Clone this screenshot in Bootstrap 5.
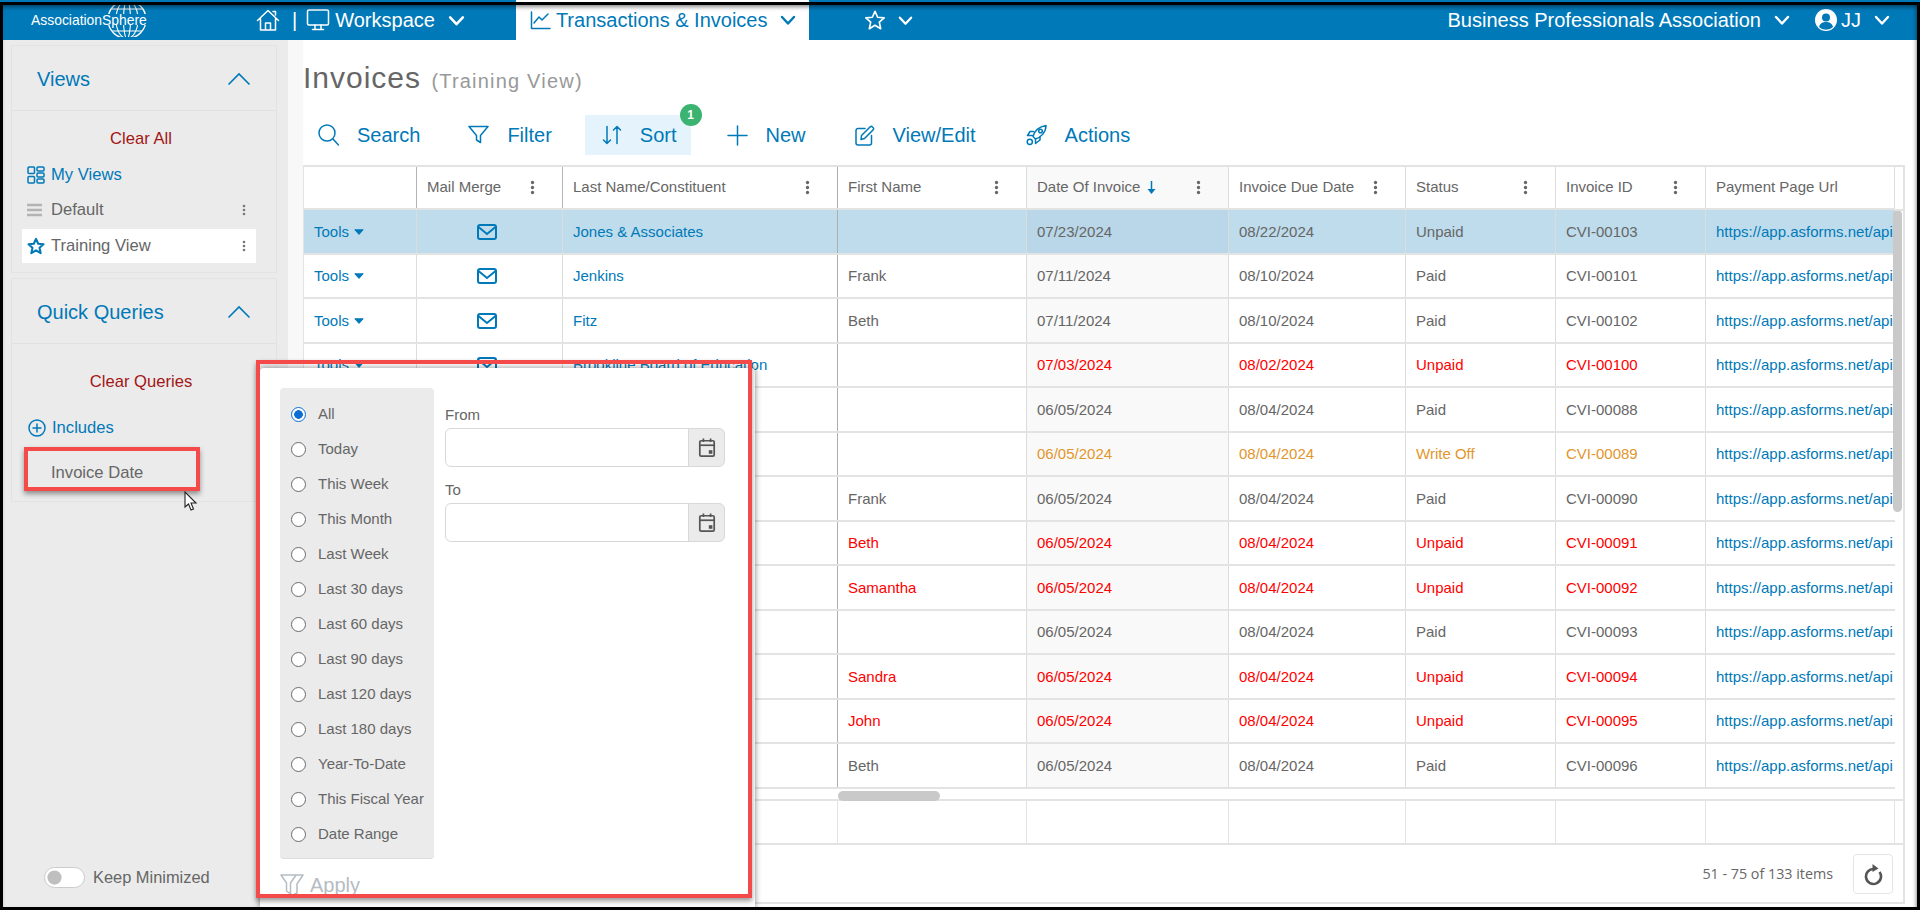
<!DOCTYPE html>
<html lang="en">
<head>
    <meta charset="UTF-8">
    <meta name="viewport" content="width=device-width, initial-scale=1.0">
    <title>Invoices - AssociationSphere</title>
    <link href="https://cdn.jsdelivr.net/npm/bootstrap@5.3.0/dist/css/bootstrap.min.css" rel="stylesheet">
    <style>
        html, body { height: 100%; }
        body { margin: 0; overflow: hidden; font-family: "Liberation Sans", Arial, sans-serif; font-size: 15px; color: #666; background: #fff; }
        svg { display: block; flex: none; }
        .ico { fill: none; stroke: currentColor; stroke-width: 1.5; stroke-linecap: round; stroke-linejoin: round; }

        .page-shell { height: 910px; position: relative; overflow: hidden; }
        .shot-frame { position: absolute; inset: 2px 0 0 0; border: 3px solid #000; box-shadow: inset 0 4px 4px -2px rgba(0,0,0,.45), inset -4px 0 4px -3px rgba(0,0,0,.35); pointer-events: none; z-index: 50; }
        .note-box { position: absolute; border: 4px solid #f44a4a; box-shadow: 0 3px 5px rgba(0,0,0,.4); pointer-events: none; z-index: 40; }
        .note-date { left: 24px; top: 447px; width: 176px; height: 44px; }
        .note-popup { left: 256px; top: 360px; width: 496px; height: 538px; }

        /* top bar */
        .top-bar { height: 40px; background: #0079b8; color: #fff; font-size: 20px; padding: 0; flex-wrap: nowrap; justify-content: flex-start; }
        .brand-box { position: relative; width: 148px; margin-left: 31px; font-size: 13.9px; line-height: 40px; color: #fff; white-space: nowrap; }
        .brand-globe { position: absolute; left: 75px; top: 3px; }
        .top-home { margin-left: 77px; }
        .top-sep { margin: 0 9px 0 12px; font-size: 20px; line-height: 40px; font-weight: 300; }
        .top-tab { height: 40px; display: flex; align-items: center; color: #fff; }
        .top-work { gap: 5px; }
        .top-tab.is-open { background: #fff; color: #0079b8; width: 293px; margin-left: 51px; padding-left: 14px; gap: 5px; }
        .top-star { margin-left: 55px; gap: 12px; stroke-width: 1.8; }
        .top-right { margin-left: auto; margin-right: 30px; gap: 13px; }
        .user-ico { margin-left: 11px; }
        .user-name { margin-left: -10px; }

        /* left side */
        .side-col { width: 288px; background: #ebebeb; padding: 5px 11px 0 11px; display: flex; flex-direction: column; flex: none; }
        .side-gap { width: 15px; background: #f8f8f8; flex: none; }
        .side-card { --bs-card-bg: #ebebeb; --bs-card-border-color: #e3e3e3; --bs-card-border-radius: 0; --bs-card-inner-border-radius: 0; width: 266px; margin-bottom: 5px; color: #666; }
        .side-card .card-header { height: 65px; padding: 2px 25px 0 25px; background: transparent; border-bottom: 1px solid #dfe1e4; display: flex; align-items: center; justify-content: space-between; color: #0079b8; font-size: 20px; }
        .side-card .card-body { padding: 0; }
        .views-card { height: 228px; }
        .query-card { height: 224px; }
        .clear-link { color: #a31515; text-align: center; font-size: 16.6px; line-height: 20px; margin-right: 6px; }
        .views-card .clear-link { margin-top: 18px; }
        .query-card .clear-link { margin-top: 28px; }
        .view-row { height: 34px; display: flex; align-items: center; padding-left: 5px; margin: 0 20px 0 10px; gap: 6px; font-size: 16.6px; }
        .view-row.is-blue { color: #0079b8; }
        .view-row.is-picked { background: #fff; margin-top: 2px; }
        .my-views { margin-top: 9px; margin-bottom: 1px; }
        .view-dots { margin-left: auto; margin-right: 10px; color: #777; }
        .star-blue { color: #0079b8; stroke-width: 2.8; }
        .includes-row { margin-top: 24px; height: 24px; padding-left: 6px; }
        .date-query { margin: 18px 0 0 39px; height: 30px; line-height: 30px; font-size: 16.6px; }
        .keep-row { margin-top: auto; height: 42px; display: flex; align-items: center; padding-left: 33px; padding-bottom: 23px; gap: 8px; margin-bottom: 0; font-size: 16.4px; }
        .keep-switch { width: 41px !important; height: 21px; margin: 0 !important; background-color: #fff; border: 1px solid #ccc; float: none; }
        .keep-wrap { padding: 0; margin: 0; min-height: 0; display: flex; }

        /* main */
        .main-col { width: 1602px; flex: none; position: relative; }
        .title-row { height: 75px; padding-top: 15px; color: #666; font-size: 30px; line-height: 46px; letter-spacing: 1px; margin: 0; }
        .title-row span { color: #999; font-size: 20px; letter-spacing: 1.2px; margin-left: 1px; }
        .tool-row { height: 50px; gap: 18px; margin: 0; }
        .tool-item { height: 40px; padding: 0 15px; display: flex; align-items: center; gap: 18px; color: #0079b8; font-size: 20px; position: relative; }
        .tool-item.is-on { background: #e5f4fc; padding-left: 17px; padding-right: 14px; margin-right: 3px; }
        .tool-item.is-edit { margin-left: 1px; }
        .tool-item.is-last { margin-left: 2px; }
        .tool-count { position: absolute; right: -11px; top: -11px; width: 22px; height: 22px; border-radius: 50%; background: #3cb371; color: #fff; font-size: 12px; font-weight: 700; display: flex; align-items: center; justify-content: center; }

        .grid-wrap { border-right: 2px solid #e3e3e3; }
        .grid-box { position: relative; border-top: 2px solid #e3e3e3; height: 624px; overflow: hidden; }
        .grid-box::after { content: ""; position: absolute; left: 1591px; right: 0; top: 42px; height: 2px; background: #e3e3e3; }
        .inv-grid { table-layout: fixed; width: 1591px; margin: 0; border-collapse: collapse; color: #666; }
        .inv-grid th, .inv-grid td { padding: 0 0 0 10px; border: 0; border-left: 1px solid #dcdcdc; border-bottom: 2px solid #e3e3e3; white-space: nowrap; overflow: hidden; vertical-align: middle; background: transparent; color: inherit; font-weight: 400; font-size: 15px; box-shadow: none; }
        .inv-grid th:first-child, .inv-grid td:first-child { border-left: 1px solid #e3e3e3; }
        .inv-grid thead th { height: 42px; }
        .inv-grid thead th:nth-child(2), .inv-grid thead th:nth-child(3) { border-left-color: #b4b4b4; }
        .inv-grid thead th:last-child { border-right: 1px solid #dcdcdc; }
        .inv-grid th:nth-child(4), .inv-grid td:nth-child(4) { border-left-color: #aeaeae; }
        .inv-grid tbody td { height: 44.5px; padding-top: 1px; }
        .inv-grid td:nth-child(5), .inv-grid th:nth-child(5) { background: #f9f9f9; }
        .inv-grid tr.is-sel td { background: #bedcec; }
        .inv-grid tr.is-sel td:nth-child(5) { background: #b9d7e8; }
        .inv-grid tr.is-red td { color: #f00; }
        .inv-grid tr.is-late td { color: #e2962c; }
        .inv-grid td a, .inv-grid tr.is-red td a { color: #0079b8; text-decoration: none; }
        .c-tool { width: 113px; } .c-mail { width: 146px; } .c-last { width: 275px; } .c-first { width: 189px; }
        .c-date { width: 202px; } .c-due { width: 177px; } .c-stat { width: 150px; } .c-id { width: 150px; } .c-url { width: 189px; }
        .head-cell { display: flex; align-items: center; justify-content: space-between; padding-right: 27px; }
        .head-dots { color: #666; }
        .sort-mark { color: #0079b8; display: inline-block; margin-left: 7px; }
        .tools-link { display: inline-flex; align-items: center; gap: 5px; }
        .mail-ico { color: #0079b8; margin-left: 50px; }
        .v-thumb { position: absolute; left: 1590px; top: 43px; width: 9px; height: 302px; border-radius: 5px; background: #c9c9c9; }
        .h-track { height: 14px; position: relative; border-bottom: 2px solid #e3e3e3; margin-top: -2px; }
        .h-thumb { position: absolute; left: 535px; top: 4px; width: 102px; height: 10px; border-radius: 5px; background: #c9c9c9; }
        .foot-grid td { height: 42px !important; border-left-color: #e3e3e3 !important; border-bottom: 0 !important; background: transparent !important; }
        .foot-grid td:last-child { border-right: 1px solid #e3e3e3; }

        .pager-row { height: 61px; border-top: 2px solid #e3e3e3; border-bottom: 2px solid #e3e3e3; padding-right: 10px; gap: 20px; font-family: "Open Sans", "Liberation Sans", sans-serif; font-size: 14.3px; color: #666; }
        .reload-btn { width: 40px; height: 40px; padding: 0; border: 1px solid #e5e5e5; border-radius: 4px; background: #fff; color: #555; display: flex; align-items: center; justify-content: center; }

        /* date popup */
        .date-pop { position: absolute; left: 260px; top: 368px; width: 495px; height: 542px; background: #fff; border-radius: 4px; box-shadow: 0 0 6px rgba(0,0,0,.45); padding: 20px 0 0 20px; z-index: 30; }
        .pop-range { width: 154px; height: 471px; background: #ebebeb; border-radius: 4px; border-bottom: 1px solid #ddd; padding: 9px 0 0 11px; flex: none; }
        .pop-range .form-check { height: 35px; min-height: 0; margin: 0; padding-left: 27px; display: flex; align-items: center; position: relative; }
        .pop-range .form-check-input { position: absolute; left: 0; top: 10px; margin: 0; width: 15px; height: 15px; border: 1.5px solid #6b6b6b; background-color: #fff; }
        .pop-range .form-check-input:checked { background-color: #fff; border-color: #0a6fd1; background-image: radial-gradient(circle, #0a6fd1 0 4px, transparent 4.6px); }
        .pop-range .form-check-label { font-size: 15px; color: #666; white-space: nowrap; }
        .pop-fields { width: 280px; margin-left: 11px; padding-top: 16px; }
        .pop-fields label { display: block; height: 22px; line-height: 22px; margin-bottom: 2px; color: #666; font-size: 15px; }
        .pop-fields .input-group { height: 39px; margin-bottom: 12px; }
        .pop-fields .form-control { border-color: #d8d8d8; border-radius: 6px 0 0 6px; height: 39px; }
        .pop-fields .input-group-text { width: 37px; padding: 0; justify-content: center; background: #ebebeb; border-color: #d8d8d8; color: #555; }
        .pop-apply { margin-top: 12px; height: 28px; display: flex; align-items: center; gap: 6px; color: #b5bcc3; font-size: 20px; }
        .mouse-arrow { position: absolute; left: 184px; top: 491px; z-index: 45; }
    </style>
</head>
<body>
<svg width="0" height="0" class="position-absolute">
    <symbol id="i-down" viewBox="0 0 16 16"><polyline points="2,5 8,11.5 14,5" fill="none" stroke="currentColor" stroke-width="2.4" stroke-linecap="round" stroke-linejoin="round"/></symbol>
    <symbol id="i-up" viewBox="0 0 24 14"><polyline points="1.5,12.5 12,2 22.5,12.5" fill="none" stroke="currentColor" stroke-width="1.6"/></symbol>
    <symbol id="i-dots" viewBox="0 0 6 18"><circle cx="3" cy="3" r="2" fill="currentColor"/><circle cx="3" cy="9" r="2" fill="currentColor"/><circle cx="3" cy="15" r="2" fill="currentColor"/></symbol>
    <symbol id="i-star" viewBox="0 0 24 24"><polygon fill="none" stroke="currentColor" stroke-linejoin="round" points="12,2.5 14.9,9 22,9.7 16.7,14.4 18.2,21.5 12,17.8 5.800,21.5 7.300,14.4 2,9.700 9.100,9"/></symbol>
    <symbol id="i-mail" viewBox="0 0 20 16"><rect x="1" y="1" width="18" height="14" rx="2" fill="none" stroke="currentColor" stroke-width="2"/><polyline points="1.500,3 10,10 18.500,3" fill="none" stroke="currentColor" stroke-width="2"/></symbol>
    <symbol id="i-cal" viewBox="0 0 20 22"><rect x="2" y="3.500" width="16" height="17" rx="1.500" fill="none" stroke="currentColor" stroke-width="1.900"/><path d="M2 8.500h16" stroke="currentColor" stroke-width="1.900"/><path d="M6 1v4M14 1v4" stroke="currentColor" stroke-width="1.900"/><rect x="12" y="14" width="4" height="4" fill="currentColor"/></symbol>
    <symbol id="i-caret" viewBox="0 0 10 6"><path d="M0.800 0.800h8.400L5 5.400z" fill="currentColor" stroke="currentColor" stroke-linejoin="round"/></symbol>
</svg>

<div class="page-shell d-flex flex-column">
    <nav class="navbar top-bar">
        <div class="brand-box">
            <svg class="brand-globe" width="42" height="34" viewBox="0 0 42 34" fill="none" stroke="#fff" stroke-width="1.100">
                <defs><clipPath id="globe-clip"><rect x="0" y="0" width="42" height="11"/><rect x="0" y="22" width="42" height="12"/></clipPath></defs>
                <g clip-path="url(#globe-clip)">
                    <circle cx="21" cy="16.500" r="19" stroke-width="1.400"/>
                    <ellipse cx="21" cy="16.500" rx="11" ry="19"/>
                    <ellipse cx="21" cy="16.500" rx="3.500" ry="19"/>
                    <path d="M6 6h30M6 28h30"/>
                </g>
            </svg>
            <span class="position-relative">AssociationSphere</span>
        </div>
        <svg class="top-home ico" width="24" height="24" viewBox="0 0 24 24"><path d="M1.500 12.500 12 2.500l10.500 10M4.500 10.500V22h15V10.500M9.500 22v-7h5v7M17 3.500h2.500V7"/></svg>
        <span class="top-sep">|</span>
        <div class="top-tab top-work">
            <svg class="ico" width="24" height="24" viewBox="0 0 24 24"><rect x="1.500" y="2" width="21" height="15" rx="1.500"/><path d="M9 17v4M15 17v4M6.500 21.500h11"/></svg>
            <span>Workspace</span>
            <svg class="ms-2" width="17" height="17"><use href="#i-down"/></svg>
        </div>
        <div class="top-tab is-open">
            <svg class="ico" width="21" height="20" viewBox="0 0 21 20"><path d="M1.500 2v16.500H20"/><path d="M4 13l5-6 3 3 6-6"/></svg>
            <span>Transactions &amp; Invoices</span>
            <svg class="ms-2" width="16" height="16"><use href="#i-down"/></svg>
        </div>
        <div class="top-tab top-star">
            <svg width="22" height="22"><use href="#i-star"/></svg>
            <svg width="15" height="15"><use href="#i-down"/></svg>
        </div>
        <div class="top-tab top-right">
            <span>Business Professionals Association</span>
            <svg width="16" height="16"><use href="#i-down"/></svg>
            <svg class="user-ico" width="24" height="24" viewBox="0 0 24 24"><circle cx="12" cy="12" r="11" fill="#fff"/><circle cx="12" cy="9.500" r="4" fill="#0079b8"/><path d="M5 19c1-4 4-5 7-5s6 1 7 5a10 10 0 0 1-14 0z" fill="#0079b8"/></svg>
            <span class="user-name">JJ</span>
            <svg width="16" height="16"><use href="#i-down"/></svg>
        </div>
    </nav>

    <div class="d-flex flex-grow-1">
        <aside class="side-col">
            <div class="card side-card views-card">
                <div class="card-header"><span>Views</span><svg width="24" height="14"><use href="#i-up"/></svg></div>
                <div class="card-body">
                    <div class="clear-link">Clear All</div>
                    <div class="view-row is-blue my-views">
                        <svg class="ico" width="18" height="18" viewBox="0 0 18 18"><rect x="1" y="1" width="6.500" height="6.500" rx="1"/><rect x="1" y="10.500" width="6.500" height="6.500" rx="1"/><rect x="10" y="1" width="7" height="4" rx="1"/><rect x="10" y="7" width="7" height="4" rx="1"/><rect x="10" y="13" width="7" height="4" rx="1"/></svg>
                        <span>My Views</span>
                    </div>
                    <div class="view-row">
                        <svg width="18" height="14" viewBox="0 0 18 14"><path d="M0 2h15M0 7h15M0 12h15" stroke="#b3b3b3" stroke-width="2.600"/></svg>
                        <span>Default</span>
                        <svg class="view-dots" width="4" height="14"><use href="#i-dots"/></svg>
                    </div>
                    <div class="view-row is-picked">
                        <svg class="star-blue" width="18" height="18"><use href="#i-star"/></svg>
                        <span>Training View</span>
                        <svg class="view-dots" width="4" height="14"><use href="#i-dots"/></svg>
                    </div>
                </div>
            </div>
            <div class="card side-card query-card">
                <div class="card-header"><span>Quick Queries</span><svg width="24" height="14"><use href="#i-up"/></svg></div>
                <div class="card-body">
                    <div class="clear-link">Clear Queries</div>
                    <div class="view-row is-blue includes-row">
                        <svg class="ico" width="18" height="18" viewBox="0 0 18 18"><circle cx="9" cy="9" r="8"/><path d="M9 5v8M5 9h8"/></svg>
                        <span>Includes</span>
                    </div>
                    <div class="date-query">Invoice Date</div>
                </div>
            </div>
            <div class="keep-row">
                <div class="form-check form-switch keep-wrap"><input class="form-check-input keep-switch" type="checkbox" role="switch" id="keepMin"></div>
                <label for="keepMin">Keep Minimized</label>
            </div>
        </aside>
        <div class="side-gap"></div>

        <main class="main-col">
            <h1 class="title-row fw-normal">Invoices <span>(Training View)</span></h1>
            <div class="d-flex tool-row">
                <div class="tool-item">
                    <svg class="ico" width="21" height="22" viewBox="0 0 21 22"><circle cx="9" cy="9" r="8"/><path d="M15 15l5.500 6"/></svg><span>Search</span>
                </div>
                <div class="tool-item">
                    <svg class="ico" width="21" height="20" viewBox="0 0 21 20"><path d="M1 1.500h19l-7.500 9v7l-4-2.500v-4.500z"/></svg><span>Filter</span>
                </div>
                <div class="tool-item is-on">
                    <svg class="ico" width="20" height="20" viewBox="0 0 20 20"><path d="M5 1.500v17M1.500 15l3.500 3.500 3.500-3.500M15 18.500v-17M11.500 5L15 1.500 18.500 5"/></svg><span>Sort</span>
                    <span class="tool-count">1</span>
                </div>
                <div class="tool-item">
                    <svg class="ico" width="21" height="21" viewBox="0 0 21 21"><path d="M10.500 1v19M1 10.500h19"/></svg><span>New</span>
                </div>
                <div class="tool-item is-edit">
                    <svg class="ico" width="20" height="21" viewBox="0 0 20 21"><path d="M10 3.500H3a2 2 0 0 0-2 2V18a2 2 0 0 0 2 2h11.500a2 2 0 0 0 2-2v-7.500"/><path d="M6.500 10.500 15 2a1.800 1.800 0 0 1 2.500 0l.5.500a1.800 1.800 0 0 1 0 2.500l-8.500 8.500-3.500 1z"/></svg><span>View/Edit</span>
                </div>
                <div class="tool-item is-last">
                    <svg class="ico" width="21" height="22" viewBox="0 0 21 22"><path d="M7 12.500C8 7 13 2.500 20 1.500 20 8 15 13.500 9.500 15z"/><circle cx="14.500" cy="7" r="1.800"/><path d="M7.500 7.500H4L1.500 11.500h5M14 12.500V16l-4.500 3.500v-4"/><circle cx="3.800" cy="17.800" r="2.600"/></svg><span>Actions</span>
                </div>
            </div>

            <div class="grid-wrap">
                <div class="grid-box">
                    <table class="table inv-grid">
                        <colgroup><col class="c-tool"><col class="c-mail"><col class="c-last"><col class="c-first"><col class="c-date"><col class="c-due"><col class="c-stat"><col class="c-id"><col class="c-url"></colgroup>
                        <thead>
                            <tr>
                                <th></th>
                                <th><div class="head-cell">Mail Merge<svg class="head-dots" width="5" height="15"><use href="#i-dots"/></svg></div></th>
                                <th><div class="head-cell">Last Name/Constituent<svg class="head-dots" width="5" height="15"><use href="#i-dots"/></svg></div></th>
                                <th><div class="head-cell">First Name<svg class="head-dots" width="5" height="15"><use href="#i-dots"/></svg></div></th>
                                <th><div class="head-cell"><span class="d-inline-flex align-items-center">Date Of Invoice<svg class="sort-mark" width="9" height="13" viewBox="0 0 9 13"><path d="M4.500 0v9" stroke="currentColor" stroke-width="1.500"/><path d="M0.500 8h8l-4 5z" fill="currentColor"/></svg></span><svg class="head-dots" width="5" height="15"><use href="#i-dots"/></svg></div></th>
                                <th><div class="head-cell">Invoice Due Date<svg class="head-dots" width="5" height="15"><use href="#i-dots"/></svg></div></th>
                                <th><div class="head-cell">Status<svg class="head-dots" width="5" height="15"><use href="#i-dots"/></svg></div></th>
                                <th><div class="head-cell">Invoice ID<svg class="head-dots" width="5" height="15"><use href="#i-dots"/></svg></div></th>
                                <th>Payment Page Url</th>
                            </tr>
                        </thead>
                        <tbody id="inv-rows"></tbody>
                    </table>
                    <div class="v-thumb"></div>
                </div>
                <div class="h-track"><div class="h-thumb"></div></div>
                <table class="table inv-grid foot-grid">
                    <colgroup><col class="c-tool"><col class="c-mail"><col class="c-last"><col class="c-first"><col class="c-date"><col class="c-due"><col class="c-stat"><col class="c-id"><col class="c-url"></colgroup>
                    <tr><td></td><td></td><td></td><td></td><td></td><td></td><td></td><td></td><td></td></tr>
                </table>
                <div class="d-flex align-items-center justify-content-end pager-row">
                    <span>51 - 75 of 133 items</span>
                    <button class="reload-btn" type="button" aria-label="Refresh">
                        <svg width="20" height="24" viewBox="0 0 20 24" fill="none" stroke="currentColor" stroke-width="2.600"><path d="M11 7a7.500 7.500 0 1 0 5.500 3"/><path d="M9.500 2l6 4.500-6 3.500z" fill="currentColor" stroke="none"/></svg>
                    </button>
                </div>
            </div>
        </main>
    </div>

    <div class="date-pop">
        <div class="d-flex">
            <div class="pop-range" id="range-list"></div>
            <div class="pop-fields">
                <label for="dateFrom">From</label>
                <div class="input-group">
                    <input class="form-control" id="dateFrom" type="text">
                    <span class="input-group-text"><svg width="18" height="21"><use href="#i-cal"/></svg></span>
                </div>
                <label for="dateTo">To</label>
                <div class="input-group">
                    <input class="form-control" id="dateTo" type="text">
                    <span class="input-group-text"><svg width="18" height="21"><use href="#i-cal"/></svg></span>
                </div>
            </div>
        </div>
        <div class="pop-apply">
            <svg class="ico" width="24" height="24" viewBox="0 0 24 24"><path d="M1 2h15l-5.500 8v11l-4-3v-8zM10 2h13l-6 9v9l-4 2"/></svg>
            <span>Apply</span>
        </div>
    </div>

    <div class="note-box note-date"></div>
    <div class="note-box note-popup"></div>
    <svg class="mouse-arrow" width="14" height="20" viewBox="0 0 14 20"><path d="M1 1v15l3.500-3 2.500 6 2.500-1-2.500-6H12z" fill="#fff" stroke="#222" stroke-width="1.100"/></svg>
    <div class="shot-frame"></div>
</div>

<script src="https://cdn.jsdelivr.net/npm/bootstrap@5.3.0/dist/js/bootstrap.bundle.min.js"></script>
<script>
    // rows: [tools shown, last, first, invoice date, due date, status, id, row class]
    const rows = [
        [1, 'Jones & Associates', '', '07/23/2024', '08/22/2024', 'Unpaid', 'CVI-00103', 'is-sel'],
        [1, 'Jenkins', 'Frank', '07/11/2024', '08/10/2024', 'Paid', 'CVI-00101', ''],
        [1, 'Fitz', 'Beth', '07/11/2024', '08/10/2024', 'Paid', 'CVI-00102', ''],
        [1, 'Brookline Board of Education', '', '07/03/2024', '08/02/2024', 'Unpaid', 'CVI-00100', 'is-red'],
        [0, '', '', '06/05/2024', '08/04/2024', 'Paid', 'CVI-00088', ''],
        [0, '', '', '06/05/2024', '08/04/2024', 'Write Off', 'CVI-00089', 'is-late'],
        [0, '', 'Frank', '06/05/2024', '08/04/2024', 'Paid', 'CVI-00090', ''],
        [0, '', 'Beth', '06/05/2024', '08/04/2024', 'Unpaid', 'CVI-00091', 'is-red'],
        [0, '', 'Samantha', '06/05/2024', '08/04/2024', 'Unpaid', 'CVI-00092', 'is-red'],
        [0, '', '', '06/05/2024', '08/04/2024', 'Paid', 'CVI-00093', ''],
        [0, '', 'Sandra', '06/05/2024', '08/04/2024', 'Unpaid', 'CVI-00094', 'is-red'],
        [0, '', 'John', '06/05/2024', '08/04/2024', 'Unpaid', 'CVI-00095', 'is-red'],
        [0, '', 'Beth', '06/05/2024', '08/04/2024', 'Paid', 'CVI-00096', ''],
        [0, '', '', '', '', '', '', '']
    ];
    const url = 'https://app.asforms.net/api';
    document.getElementById('inv-rows').innerHTML = rows.map(r => `
        <tr class="${r[7]}">
            <td>${r[0] ? '<a class="tools-link" href="#">Tools<svg width="10" height="6"><use href="#i-caret"/></svg></a>' : ''}</td>
            <td>${r[0] ? '<svg class="mail-ico" width="20" height="16"><use href="#i-mail"/></svg>' : ''}</td>
            <td>${r[1] ? `<a href="#">${r[1].replace('&', '&amp;')}</a>` : ''}</td>
            <td>${r[2]}</td><td>${r[3]}</td><td>${r[4]}</td><td>${r[5]}</td><td>${r[6]}</td>
            <td>${r[6] ? `<a href="#">${url}</a>` : ''}</td>
        </tr>`).join('');

    const ranges = ['All', 'Today', 'This Week', 'This Month', 'Last Week', 'Last 30 days', 'Last 60 days', 'Last 90 days', 'Last 120 days', 'Last 180 days', 'Year-To-Date', 'This Fiscal Year', 'Date Range'];
    document.getElementById('range-list').innerHTML = ranges.map((name, i) => `
        <div class="form-check">
            <input class="form-check-input" type="radio" name="range" id="range${i}" ${i === 0 ? 'checked' : ''}>
            <label class="form-check-label" for="range${i}">${name}</label>
        </div>`).join('');
</script>
</body>
</html>
